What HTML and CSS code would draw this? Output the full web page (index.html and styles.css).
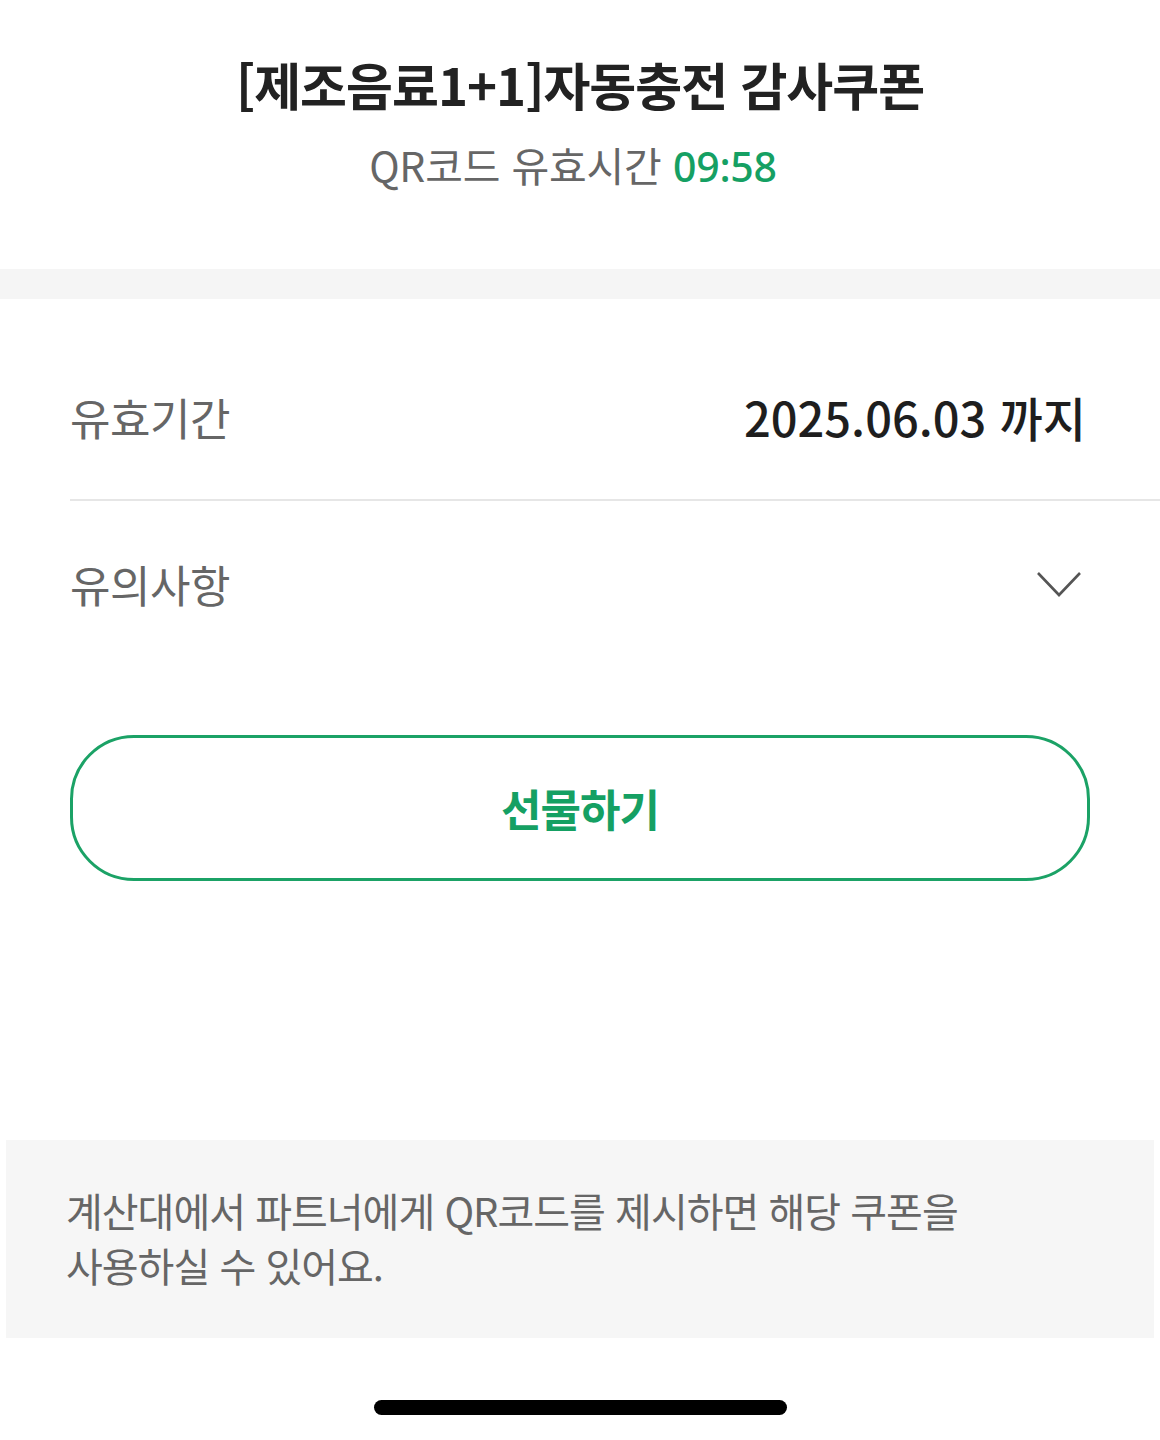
FILE: index.html
```html
<!DOCTYPE html>
<html lang="ko">

<head>
    <meta charset="UTF-8">
    <title>쿠폰 상세</title>
    <link rel="stylesheet" href="styles.css">
</head>

<body>
    <div class="page">
        <div class="head">
            <h2>[제조음료1+1]자동충전 감사쿠폰</h2>
            <p>QR코드 유효시간 <span class="time">09:58</span></p>
        </div>
        <div class="band"></div>
        <ul class="info">
            <li class="row">
                <span class="label">유효기간</span>
                <span class="value">2025.06.03 까지</span>
            </li>
            <li class="row">
                <span class="label">유의사항</span>
                <svg class="arrow" width="46" height="28" viewBox="0 0 46 28">
                    <path d="M2 3 L23 25 L44 3" fill="none" stroke="#555" stroke-width="2.6" />
                </svg>
            </li>
        </ul>
        <div class="btn-wrap">
            <a href="#" class="gift">선물하기</a>
        </div>
        <div class="notice">
            <p>계산대에서 파트너에게 QR코드를 제시하면 해당 쿠폰을<br>사용하실 수 있어요.</p>
        </div>
        <div class="home-bar"></div>
    </div>
</body>

</html>
```
FILE: styles.css
```css
body,
h2,
p {
    margin: 0;
}

ul {
    list-style: none;
    margin: 0;
    padding: 0;
}

body {
    background: #fff;
    font-family: "Noto Sans CJK KR", "Noto Sans", sans-serif;
    color: #222;
}

.page {
    width: 1160px;
    height: 1440px;
    display: flex;
    flex-direction: column;
}

.head {
    height: 269px;
    padding-top: 48px;
    box-sizing: border-box;
    text-align: center;
}

.head h2 {
    font-size: 51px;
    font-weight: bold;
    line-height: 72px;
    letter-spacing: -1px;
    color: #222;
}

.head p {
    margin-top: 14px;
    padding-right: 14px;
    font-size: 41px;
    line-height: 60px;
    color: #666;
    letter-spacing: -0.2px;
}

/* 콜론 모양 때문에 숫자는 Noto Sans */
.head .time {
    font-family: "Noto Sans", "Noto Sans CJK KR", sans-serif;
    color: #15a063;
    font-weight: 500;
}

.band {
    height: 30px;
    background: #f5f5f5;
}

.info {
    padding-left: 70px;
    margin-top: 35px;
}

.row {
    height: 166px;
    display: flex;
    align-items: center;
    justify-content: space-between;
    padding-right: 74px;
}

.row:first-child {
    border-bottom: 2px solid #e6e6e6;
    height: 165px;
}

.label {
    font-size: 44px;
    color: #666;
    letter-spacing: -0.5px;
}

.value {
    font-size: 47px;
    color: #1e1e1e;
    font-weight: 500;
    letter-spacing: 0;
}

.arrow {
    margin-right: 4px;
}

.btn-wrap {
    padding: 68px 70px 0 70px;
}

.gift {
    display: flex;
    align-items: center;
    justify-content: center;
    height: 146px;
    box-sizing: border-box;
    border: 3px solid #1ba266;
    border-radius: 64px;
    font-size: 44px;
    font-weight: bold;
    color: #15a063;
    text-decoration: none;
    letter-spacing: -1px;
}

.notice {
    margin: 259px 6px 0 6px;
    height: 198px;
    background: #f6f6f6;
    padding: 43px 60px 0 60px;
    box-sizing: border-box;
}

.notice p {
    font-size: 40px;
    line-height: 55px;
    color: #666;
    letter-spacing: -1px;
}

.home-bar {
    width: 413px;
    height: 15px;
    margin: 62px auto 0 auto;
    border-radius: 8px;
    background: #000;
}
```
